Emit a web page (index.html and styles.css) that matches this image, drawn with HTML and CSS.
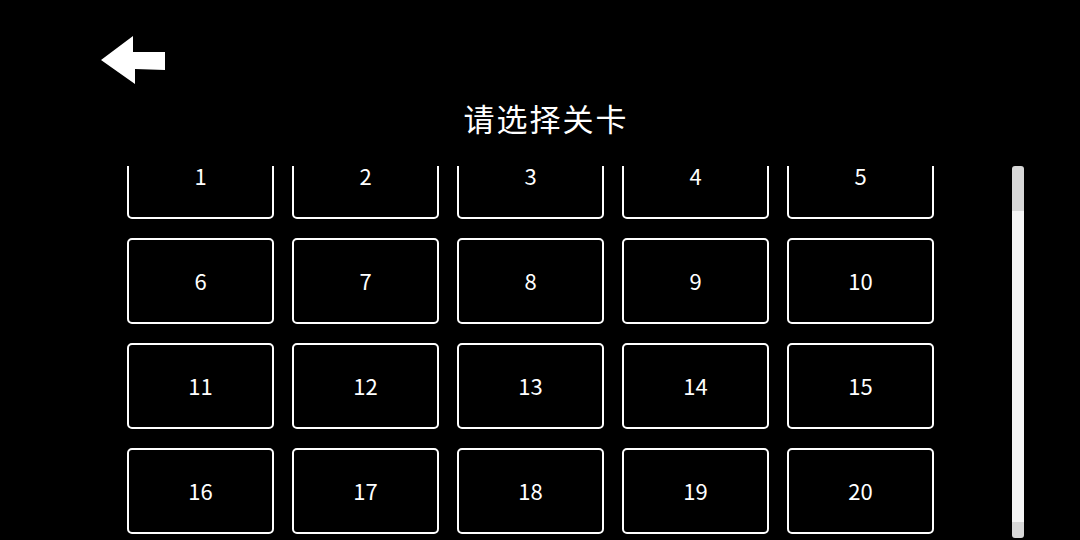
FILE: index.html
```html
<!DOCTYPE html>
<html lang="zh-CN">
<head>
<meta charset="utf-8">
<title>请选择关卡</title>
<link rel="stylesheet" href="styles.css">
</head>
<body>
<div class="screen">
  <header class="top">
    <button class="back" aria-label="返回">
      <svg width="66" height="50" viewBox="0 0 66 50">
        <polygon points="1,25 33,1 33,17 65,17 65,35 35,34 35,49" fill="#fff"/>
      </svg>
    </button>
    <h1 class="title">请选择关卡</h1>
  </header>
  <main class="body">
    <div class="levels">
      <div class="grid">
        <div class="card">1</div>
        <div class="card">2</div>
        <div class="card">3</div>
        <div class="card">4</div>
        <div class="card">5</div>
        <div class="card">6</div>
        <div class="card">7</div>
        <div class="card">8</div>
        <div class="card">9</div>
        <div class="card">10</div>
        <div class="card">11</div>
        <div class="card">12</div>
        <div class="card">13</div>
        <div class="card">14</div>
        <div class="card">15</div>
        <div class="card">16</div>
        <div class="card">17</div>
        <div class="card">18</div>
        <div class="card">19</div>
        <div class="card">20</div>
      </div>
    </div>
    <div class="scrollbar">
      <div class="track-top"></div>
      <div class="thumb"></div>
      <div class="track-bottom"></div>
    </div>
  </main>
</div>
</body>
</html>
```
FILE: styles.css
```css
html, body {
  margin: 0;
  padding: 0;
  background: #000;
}

.screen {
  width: 1080px;
  height: 540px;
  overflow: hidden;
  background: #000;
  color: #fff;
  font-family: "Noto Sans CJK SC", "Noto Sans", sans-serif;
  display: flex;
  flex-direction: column;
}

.top {
  height: 166px;
  position: relative;
  display: flex;
  flex-direction: column;
  align-items: center;
}

.back {
  position: absolute;
  left: 100px;
  top: 35px;
  padding: 0;
  border: 0;
  background: none;
  line-height: 0;
}

.title {
  margin: 98px 0 0;
  font-size: 31px;
  font-weight: 400;
  line-height: 40px;
  letter-spacing: 2px;
  padding-left: 12px;
}

.body {
  flex: 1;
  display: flex;
  min-height: 0;
}

.levels {
  margin-left: 127px;
  width: 807px;
  overflow: hidden;
}

/* scrolled 33px into the list */
.grid {
  margin-top: -33px;
  display: grid;
  grid-template-columns: repeat(5, 147px);
  grid-auto-rows: 86px;
  column-gap: 18px;
  row-gap: 19px;
}

.card {
  box-sizing: border-box;
  border: 2px solid #fff;
  border-radius: 5px;
  display: flex;
  align-items: center;
  justify-content: center;
  font-size: 22px;
  line-height: 18px;
  padding-bottom: 3px;
}

.scrollbar {
  margin-left: 78px;
  width: 12px;
  height: 372px;
  display: flex;
  flex-direction: column;
  border-radius: 3px;
  overflow: hidden;
}

.track-top {
  height: 45px;
  background: #d8d8d8;
}

.thumb {
  flex: 1;
  background: #f5f5f5;
}

.track-bottom {
  height: 16px;
  background: #d8d8d8;
}
```
